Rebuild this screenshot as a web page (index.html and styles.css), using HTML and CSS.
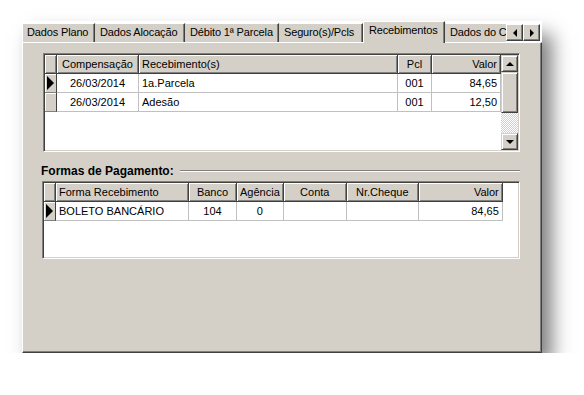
FILE: index.html
```html
<!DOCTYPE html>
<html lang="pt">
<head>
    <meta charset="UTF-8">
    <title>Recebimentos</title>
    <link rel="stylesheet" href="styles.css">
</head>
<body>
    <div class="window">
        <!--abas-->
        <div class="tab-strip">
            <span class="tab w1">Dados Plano</span>
            <span class="tab w2">Dados Alocação</span>
            <span class="tab w3">Débito 1ª Parcela</span>
            <span class="tab w4">Seguro(s)/Pcls</span>
            <span class="tab w5 active">Recebimentos</span>
            <span class="tab w6">Dados do Cliente</span>
            <span class="tab-btn"><i class="tri-left"></i></span>
            <span class="tab-btn"><i class="tri-right"></i></span>
        </div>

        <div class="panel">
            <!--grade de recebimentos-->
            <div class="grid grid-top">
                <table class="dbgrid">
                    <colgroup>
                        <col style="width:12px">
                        <col style="width:82px">
                        <col style="width:259px">
                        <col style="width:34px">
                        <col style="width:69px">
                    </colgroup>
                    <tr>
                        <th class="ind"></th>
                        <th class="c">Compensação</th>
                        <th class="l">Recebimento(s)</th>
                        <th class="c">Pcl</th>
                        <th class="r">Valor</th>
                    </tr>
                    <tr>
                        <td class="ind"><i class="arrow"></i></td>
                        <td class="c">26/03/2014</td>
                        <td class="l">1a.Parcela</td>
                        <td class="c">001</td>
                        <td class="r">84,65</td>
                    </tr>
                    <tr>
                        <td class="ind"></td>
                        <td class="c">26/03/2014</td>
                        <td class="l">Adesão</td>
                        <td class="c">001</td>
                        <td class="r">12,50</td>
                    </tr>
                </table>
                <div class="vscroll">
                    <span class="sbtn"><i class="tri-up"></i></span>
                    <span class="thumb"></span>
                    <span class="track"></span>
                    <span class="sbtn"><i class="tri-down"></i></span>
                </div>
            </div>

            <!--formas de pagamento-->
            <div class="group-title">
                <span>Formas de Pagamento:</span>
                <span class="line"></span>
            </div>
            <div class="grid grid-bottom">
                <table class="dbgrid">
                    <colgroup>
                        <col style="width:12px">
                        <col style="width:133px">
                        <col style="width:48px">
                        <col style="width:45px">
                        <col style="width:63px">
                        <col style="width:72px">
                        <col style="width:84px">
                    </colgroup>
                    <tr>
                        <th class="ind"></th>
                        <th class="l">Forma Recebimento</th>
                        <th class="c">Banco</th>
                        <th class="c">Agência</th>
                        <th class="c">Conta</th>
                        <th class="c">Nr.Cheque</th>
                        <th class="r">Valor</th>
                    </tr>
                    <tr>
                        <td class="ind"><i class="arrow"></i></td>
                        <td class="l">BOLETO BANCÁRIO</td>
                        <td class="c">104</td>
                        <td class="c">0</td>
                        <td class="c"></td>
                        <td class="c"></td>
                        <td class="r">84,65</td>
                    </tr>
                </table>
            </div>
        </div>
    </div>
</body>
</html>
```

FILE: styles.css
```css
* {
    margin: 0;
    padding: 0;
    box-sizing: border-box;
}
body {
    background: #fff;
    font-family: "Liberation Sans", Arial, sans-serif;
    font-size: 11px;
    color: #000;
}
.window {
    display: flex;
    flex-direction: column;
    margin: 21px 0 0 22px;
    width: 520px;
    height: 332px;
    box-shadow: 10px 13px 18px rgba(0, 0, 0, .5);
    background: #fff;
}

/* abas */
.tab-strip {
    display: flex;
    align-items: flex-end;
    height: 21px;
    background: #fff;
}
.tab {
    height: 19px;
    padding: 2px 0 0 4px;
    white-space: nowrap;
    overflow: hidden;
    letter-spacing: -0.15px;
    background: #d4d0c8;
    border-top: 1px solid #fff;
    border-left: 1px solid #fff;
    border-right: 1px solid #404040;
    box-shadow: inset -1px 0 #808080;
}
.tab.w1 { width: 73px; }
.tab.w2 { width: 90px; border-left-color: #d4d0c8; }
.tab.w3 { width: 94px; border-left-color: #d4d0c8; }
.tab.w4 { width: 84px; border-left-color: #d4d0c8; }
.tab.w5 { width: 82px; }
.tab.w6 { width: 61px; border-left-color: #d4d0c8; border-right: 0; box-shadow: none; }
.tab.active {
    position: relative;
    height: 22px;
    margin-bottom: -1px;
    padding-top: 2px;
    padding-left: 5px;
}
.tab-btn {
    display: flex;
    align-items: center;
    justify-content: center;
    align-self: center;
    width: 17px;
    height: 17px;
    margin-top: 2px;
    background: #d4d0c8;
    border: 1px solid;
    border-color: #fff #404040 #404040 #fff;
    box-shadow: inset -1px -1px #808080;
}
.tri-left, .tri-right, .tri-up, .tri-down, .arrow {
    display: block;
    width: 0;
    height: 0;
    border-style: solid;
}
.tri-left { border-width: 4px 4px 4px 0; border-color: transparent #000 transparent transparent; }
.tri-right { border-width: 4px 0 4px 4px; border-color: transparent transparent transparent #000; }
.tri-up { border-width: 0 4px 4px 4px; border-color: transparent transparent #000 transparent; }
.tri-down { border-width: 4px 4px 0 4px; border-color: #000 transparent transparent transparent; }
.arrow {
    margin-left: 2px;
    border-width: 7px 0 7px 7px;
    border-color: transparent transparent transparent #000;
}

/* painel */
.panel {
    flex: 1;
    background: #d4d0c8;
    border-top: 1px solid #fff;
    border-left: 1px solid #fff;
    border-right: 1px solid #404040;
    border-bottom: 1px solid #404040;
    box-shadow: inset -1px -1px #808080;
    padding: 10px 0 0 20px;
}

/* grades */
.grid {
    display: flex;
    align-items: flex-start;
    width: 477px;
    background: #fff;
    border: 1px solid;
    border-color: #808080 #fff #fff #808080;
    box-shadow: inset 1px 1px #404040, inset -1px -1px #d4d0c8;
    padding: 1px 1px 1px 1px;
}
.grid-top {
    height: 99px;
}
.grid-bottom {
    width: 478px;
    height: 78px;
    margin-left: -1px;
}
.dbgrid {
    border-collapse: separate;
    border-spacing: 0;
    table-layout: fixed;
}
.dbgrid th, .dbgrid td {
    height: 19px;
    padding: 0 3px;
    white-space: nowrap;
    overflow: hidden;
    font-weight: normal;
}
.dbgrid th {
    background: #d4d0c8;
    border-right: 1px solid #404040;
    border-bottom: 1px solid #404040;
    box-shadow: inset 1px 1px #fff, inset -1px -1px #808080;
}
.dbgrid td {
    border-right: 1px solid #c0c0c0;
    border-bottom: 1px solid #c0c0c0;
}
.dbgrid td.ind {
    padding: 0;
    background: #d4d0c8;
    border-right: 1px solid #404040;
    border-bottom: 1px solid #808080;
    box-shadow: inset 1px 1px #fff;
}
.dbgrid th.ind { padding: 0; }
.l { text-align: left; }
.c { text-align: center; }
.r { text-align: right; }

/* barra de rolagem */
.vscroll {
    display: flex;
    flex-direction: column;
    width: 17px;
    height: 95px;
    margin-left: auto;
}
.sbtn, .thumb {
    display: flex;
    align-items: center;
    justify-content: center;
    background: #d4d0c8;
    border: 1px solid;
    border-color: #d4d0c8 #404040 #404040 #d4d0c8;
    box-shadow: inset 1px 1px #fff, inset -1px -1px #808080;
}
.sbtn { height: 17px; }
.thumb { height: 41px; }
.track {
    flex: 1;
    background: repeating-conic-gradient(#d4d0c8 0 25%, #fff 0 50%) 0 0 / 2px 2px;
}

/* grupo */
.group-title {
    display: flex;
    align-items: center;
    gap: 6px;
    width: 479px;
    margin: 12px 0 3px -2px;
    font-weight: bold;
    font-size: 12px;
}
.group-title .line {
    flex: 1;
    border-top: 1px solid #808080;
    border-bottom: 1px solid #fff;
}
```
